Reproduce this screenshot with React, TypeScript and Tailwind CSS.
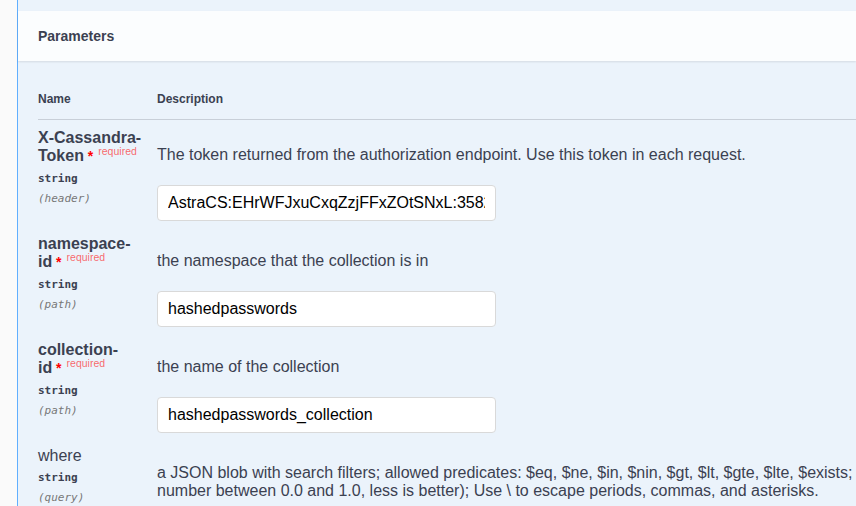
import React from 'react'

type Param = {
  name: React.ReactNode
  required?: boolean
  type: string
  loc: string
  description: React.ReactNode
  value?: string
}

const params: Param[] = [
  {
    name: (
      <>
        X-Cassandra-
        <br />
        Token
      </>
    ),
    required: true,
    type: 'string',
    loc: '(header)',
    description: 'The token returned from the authorization endpoint. Use this token in each request.',
    value: 'AstraCS:EHrWFJxuCxqZzjFFxZOtSNxL:3582c1f0e8a4b9d7c6e5f4a3b2c1d0e9f8a7b6c5',
  },
  {
    name: (
      <>
        namespace-
        <br />
        id
      </>
    ),
    required: true,
    type: 'string',
    loc: '(path)',
    description: 'the namespace that the collection is in',
    value: 'hashedpasswords',
  },
  {
    name: (
      <>
        collection-
        <br />
        id
      </>
    ),
    required: true,
    type: 'string',
    loc: '(path)',
    description: 'the name of the collection',
    value: 'hashedpasswords_collection',
  },
  {
    name: 'where',
    type: 'string',
    loc: '(query)',
    description: (
      <>
        <span className="block whitespace-nowrap">
          a JSON blob with search filters; allowed predicates: $eq, $ne, $in, $nin, $gt, $lt, $gte, $lte, $exists; allowed
          boolean operators: $and, $or, $not; allowed hints: $selectivity (a
        </span>
        <span className="block whitespace-nowrap">
          number between 0.0 and 1.0, less is better); Use \ to escape periods, commas, and asterisks.
        </span>
      </>
    ),
  },
]

function ParamRow({ p }: { p: Param }) {
  return (
    <div className="grid grid-cols-[119px_1fr] pt-[9px] pb-[5px]">
      <div>
        <div className={`text-[16px] leading-[18px] ${p.required ? 'font-bold' : 'font-normal'}`}>
          {p.name}
          {p.required && (
            <>
              <span className="text-[14px] text-[#ff0000]">&nbsp;*</span>
              <span className="relative top-[-6px] pl-[5px] text-[10.5px] font-normal text-[rgba(255,0,0,0.6)]">
                required
              </span>
            </>
          )}
        </div>
        <div className="py-[5px] font-['DejaVu_Sans_Mono',monospace] text-[11px] font-bold leading-[15px]">
          {p.type}
        </div>
        <div className="font-['DejaVu_Sans_Mono',monospace] text-[11px] italic leading-[15px] text-[#777777]">
          {p.loc}
        </div>
      </div>
      <div className="pt-[17px]">
        <div className="text-[16px] leading-[18px]">{p.description}</div>
        {p.value !== undefined && (
          <input
            readOnly
            value={p.value}
            className="mt-[21px] block h-[36px] w-[339px] rounded-[4px] border border-[#d9d9d9] bg-white px-[10px] text-[16px] text-black outline-none"
          />
        )}
      </div>
    </div>
  )
}

export default function App() {
  return (
    <div className="flex h-[506px] w-[856px] overflow-hidden bg-[#fafafa] font-['Liberation_Sans',Arial,sans-serif] text-[#3b4151]">
      <div className="w-[17px] shrink-0" />
      <div className="min-w-0 flex-1 border-l border-[#61affe] bg-[#ebf3fb] pt-[11px]">
        {/* Section header */}
        <div className="flex h-[50px] items-center bg-white/80 px-[20px] shadow-[0_1px_2px_rgba(0,0,0,0.1)]">
          <h4 className="text-[14px] font-bold">Parameters</h4>
        </div>

        {/* Table */}
        <div className="pl-[20px]">
          <div className="grid grid-cols-[119px_1fr] border-b border-[#3b4151]/20 pt-[31px] pb-[13px] text-[12px] font-bold leading-[14px]">
            <div>Name</div>
            <div>Description</div>
          </div>
          {params.map((p, i) => (
            <ParamRow key={i} p={p} />
          ))}
        </div>
      </div>
    </div>
  )
}
